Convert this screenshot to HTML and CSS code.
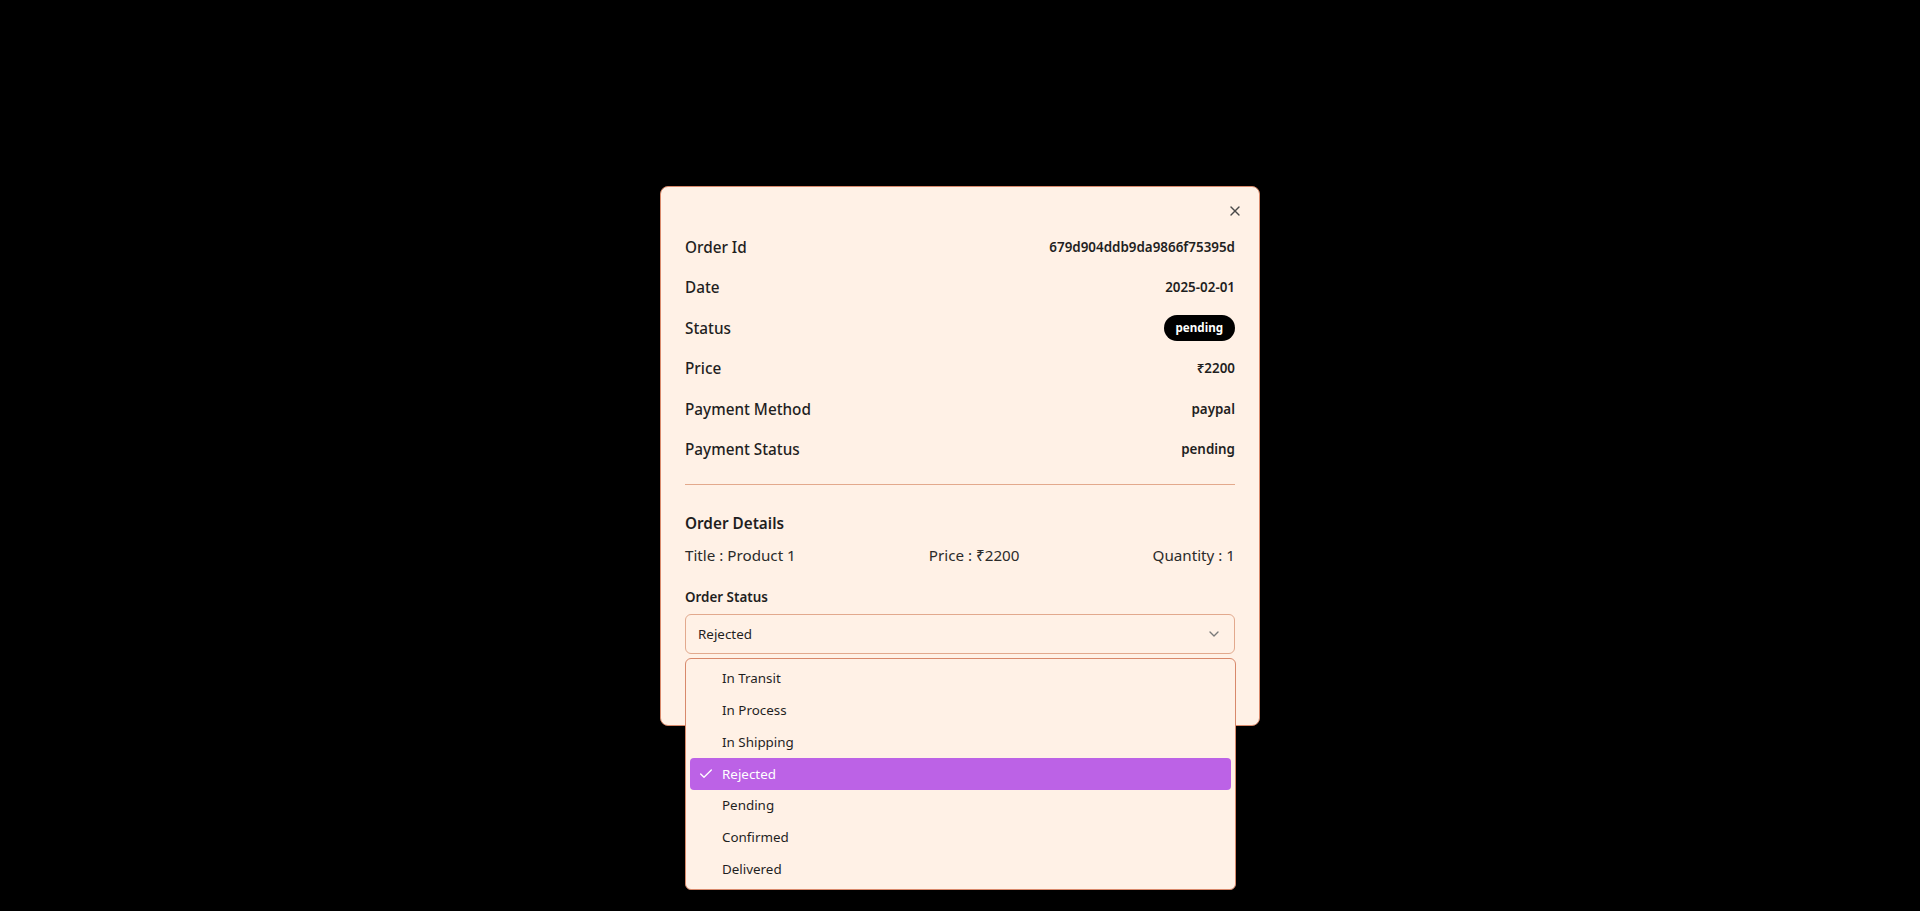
FILE: index.html
```html
<!DOCTYPE html>
<html lang="en">
<head>
<meta charset="utf-8">
<title>Order Details</title>
<link rel="stylesheet" href="styles.css">
</head>
<body>
<div class="overlay">
  <div class="dialog" role="dialog">
    <button class="close" aria-label="Close">
      <svg viewBox="0 0 24 24" width="16" height="16" fill="none" stroke="currentColor" stroke-width="2" stroke-linecap="round" stroke-linejoin="round"><path d="M18 6 6 18"/><path d="m6 6 12 12"/></svg>
    </button>
    <div class="info">
      <div class="row"><span class="label">Order Id</span><span class="value">679d904ddb9da9866f75395d</span></div>
      <div class="row"><span class="label">Date</span><span class="value">2025-02-01</span></div>
      <div class="row"><span class="label">Status</span><span class="badge">pending</span></div>
      <div class="row"><span class="label">Price</span><span class="value">₹2200</span></div>
      <div class="row"><span class="label">Payment Method</span><span class="value">paypal</span></div>
      <div class="row"><span class="label">Payment Status</span><span class="value">pending</span></div>
    </div>
    <div class="divider"></div>
    <div class="details-title">Order Details</div>
    <div class="product">
      <span>Title : Product 1</span>
      <span>Price : ₹2200</span>
      <span>Quantity : 1</span>
    </div>
    <div class="field-label">Order Status</div>
    <div class="select-wrap">
      <div class="select">
        <span>Rejected</span>
        <svg class="chev" viewBox="0 0 24 24" width="16" height="16" fill="none" stroke="currentColor" stroke-width="2" stroke-linecap="round" stroke-linejoin="round"><path d="m6 9 6 6 6-6"/></svg>
      </div>
      <ul class="menu">
        <li class="item">In Transit</li>
        <li class="item">In Process</li>
        <li class="item">In Shipping</li>
        <li class="item selected">
          <svg class="check" viewBox="0 0 24 24" width="16" height="16" fill="none" stroke="currentColor" stroke-width="2" stroke-linecap="round" stroke-linejoin="round"><path d="M20 6 9 17l-5-5"/></svg>
          Rejected
        </li>
        <li class="item">Pending</li>
        <li class="item">Confirmed</li>
        <li class="item">Delivered</li>
      </ul>
    </div>
  </div>
</div>
</body>
</html>
```

FILE: styles.css
```css
* { box-sizing: border-box; }
html, body { margin: 0; padding: 0; }
body {
  background: #000;
  font-family: "Noto Sans", "Open Sans", sans-serif;
  color: #1f1f1f;
}
.overlay {
  height: 911px;
  display: flex;
  align-items: center;
  justify-content: center;
}
.dialog {
  position: relative;
  width: 600px;
  height: 540px;
  background: #fff1e6;
  border: 1px solid #d8896b;
  border-radius: 8px;
  padding: 24px;
}
.close {
  position: absolute;
  top: 16px;
  right: 16px;
  width: 16px;
  height: 16px;
  padding: 0;
  border: 0;
  background: none;
  color: #4a4a4a;
  display: flex;
}
.info {
  margin-top: 16px;
}
.row {
  height: 40.5px;
  display: flex;
  align-items: center;
  justify-content: space-between;
}
.label {
  font-size: 15.3px;
  font-weight: 500;
  line-height: 24px;
  color: #1f1f1f;
}
.value {
  font-size: 13.4px;
  font-weight: 600;
  line-height: 20px;
  color: #1f1f1f;
}
.badge {
  background: #000;
  color: #fff;
  font-size: 11.6px;
  font-weight: 700;
  line-height: 16px;
  padding: 5px 12px;
  border-radius: 999px;
}
.divider {
  margin-top: 14px;
  border-top: 1px solid #e3a98c;
}
.details-title {
  margin-top: 26px;
  font-size: 15.3px;
  font-weight: 600;
  line-height: 24px;
}
.product {
  margin-top: 8px;
  display: flex;
  justify-content: space-between;
  font-size: 15.2px;
  line-height: 24px;
  color: #2b2b2b;
}
.field-label {
  margin-top: 20px;
  font-size: 13.4px;
  font-weight: 600;
  line-height: 20px;
}
.select-wrap {
  position: relative;
  margin-top: 7px;
}
.select {
  height: 40px;
  border: 1px solid #e2a98d;
  border-radius: 6px;
  padding: 0 12px;
  display: flex;
  align-items: center;
  justify-content: space-between;
  font-size: 13.4px;
  color: #1f1f1f;
}
.chev { color: #7a7a7a; }
.menu {
  position: absolute;
  top: 44px;
  left: 0;
  right: -1px;
  margin: 0;
  padding: 4px;
  list-style: none;
  background: #fff1e6;
  border: 1px solid #d8896b;
  border-radius: 6px;
  z-index: 10;
}
.item {
  position: relative;
  height: 31.75px;
  display: flex;
  align-items: center;
  padding-left: 32px;
  font-size: 13.4px;
  color: #1f1f1f;
  border-radius: 4px;
}
.item.selected {
  background: #bc62e6;
  color: #fff;
}
.check {
  position: absolute;
  left: 8px;
  top: 8px;
}
```
